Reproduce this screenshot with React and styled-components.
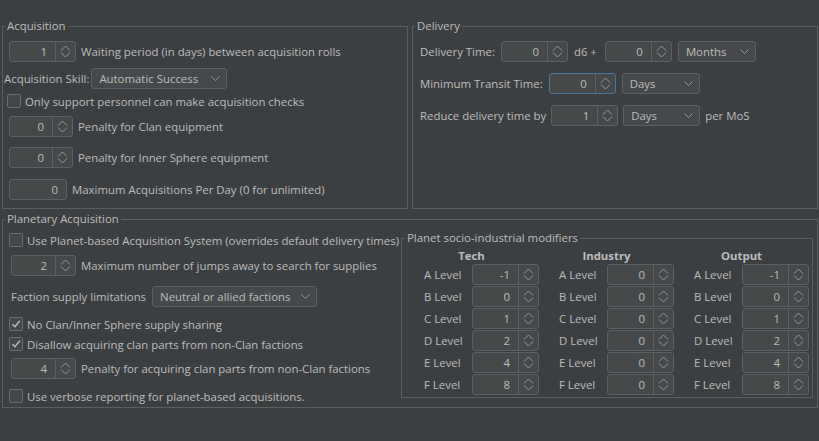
import React from "react";
import styled, { createGlobalStyle } from "styled-components";

const GlobalStyle = createGlobalStyle`
  html, body {
    margin: 0;
    background: #3c3f41;
  }
  body {
    font-family: "Open Sans", "Noto Sans", sans-serif;
    font-size: 11.4px;
    color: #bdbdbd;
  }
`;

const techMods = [-1, 0, 1, 2, 4, 8];
const industryMods = [0, 0, 0, 0, 0, 0];
const outputMods = [-1, 0, 1, 2, 4, 8];
const levels = ["A", "B", "C", "D", "E", "F"];

const SpinIcon = () => (
    <svg width="19" height="19" viewBox="0 0 19 19" fill="none" stroke="#9a9da0" strokeWidth="1">
        <path d="M5 8.5 L9.5 4 L14 8.5" />
        <path d="M5 10.5 L9.5 15 L14 10.5" />
    </svg>
);

const ComboIcon = () => (
    <svg width="9" height="6" viewBox="0 0 9 6" fill="none" stroke="#9a9da0" strokeWidth="1">
        <path d="M0.5 0.5 L4.5 4.5 L8.5 0.5" />
    </svg>
);

const CheckIcon = () => (
    <svg width="12" height="12" viewBox="0 0 12 12" fill="none" stroke="#bbbbbb" strokeWidth="1.5">
        <path d="M2.5 6.2 L5 8.7 L9.8 2.8" />
    </svg>
);

const Spinner = ({ value, w = 67, focused }) => (
    <SpinBox $w={w} $focused={focused}>
        <SpinValue>{value}</SpinValue>
        <SpinArrows>
            <SpinIcon />
        </SpinArrows>
    </SpinBox>
);

const Combo = ({ value, w }) => (
    <ComboBox $w={w}>
        <span>{value}</span>
        <ComboIcon />
    </ComboBox>
);

const Check = ({ checked, label }) => (
    <>
        <CheckBox>{checked && <CheckIcon />}</CheckBox>
        <Label>{label}</Label>
    </>
);

const ModColumnView = ({ title, values }) => (
    <ModColumn>
        <ModHeader>{title}</ModHeader>
        {values.map((v, i) => (
            <ModRow key={levels[i]}>
                <Label>{levels[i]} Level</Label>
                <Spinner value={v} />
            </ModRow>
        ))}
    </ModColumn>
);

export default function App() {
    return (
        <Page>
            <GlobalStyle />
            <TopRow>
                <Group $w={406} $h={190}>
                    <Title>Acquisition</Title>
                    <Row $mt={8} $indent={6} $gap={5}>
                        <Spinner value="1" />
                        <Label>Waiting period (in days) between acquisition rolls</Label>
                    </Row>
                    <Row $mt={6} $indent={1} $gap={2}>
                        <Label>Acquisition Skill:</Label>
                        <Combo value="Automatic Success" w={136} />
                    </Row>
                    <Row $mt={5} $indent={4} $gap={4} $h={14}>
                        <Check label="Only support personnel can make acquisition checks" />
                    </Row>
                    <Row $mt={8} $indent={6} $gap={5}>
                        <Spinner value="0" w={64} />
                        <Label>Penalty for Clan equipment</Label>
                    </Row>
                    <Row $mt={10} $indent={6} $gap={5}>
                        <Spinner value="0" w={64} />
                        <Label>Penalty for Inner Sphere equipment</Label>
                    </Row>
                    <Row $mt={11} $indent={6} $gap={5}>
                        <TextField>0</TextField>
                        <Label>Maximum Acquisitions Per Day (0 for unlimited)</Label>
                    </Row>
                </Group>
                <Group $w={406} $h={190}>
                    <Title>Delivery</Title>
                    <Row $mt={8} $indent={7} $gap={6}>
                        <Label>Delivery Time:</Label>
                        <Spinner value="0" />
                        <Dice>d6 +</Dice>
                        <Spinner value="0" />
                        <Combo value="Months" w={78} />
                    </Row>
                    <Row $mt={11} $indent={7} $gap={6}>
                        <Label>Minimum Transit Time:</Label>
                        <Spinner value="0" focused />
                        <Combo value="Days" w={78} />
                    </Row>
                    <Row $mt={11} $indent={7} $gap={5}>
                        <Label>Reduce delivery time by</Label>
                        <Spinner value="1" />
                        <Combo value="Days" w={77} />
                        <Label>per MoS</Label>
                    </Row>
                </Group>
            </TopRow>
            <Group $w={816} $h={196} $mt={3}>
                <Title>Planetary Acquisition</Title>
                <PlanetBody>
                    <LeftColumn>
                        <Row $mt={7} $indent={6} $gap={4} $h={14}>
                            <Check label="Use Planet-based Acquisition System (overrides default delivery times)" />
                        </Row>
                        <Row $mt={8} $indent={8} $gap={5}>
                            <Spinner value="2" w={65} />
                            <Label>Maximum number of jumps away to search for supplies</Label>
                        </Row>
                        <Row $mt={10} $indent={8} $gap={6}>
                            <Label>Faction supply limitations</Label>
                            <Combo value="Neutral or allied factions" w={165} />
                        </Row>
                        <Row $mt={10} $indent={6} $gap={4} $h={14}>
                            <Check checked label="No Clan/Inner Sphere supply sharing" />
                        </Row>
                        <Row $mt={6} $indent={6} $gap={4} $h={14}>
                            <Check checked label="Disallow acquiring clan parts from non-Clan factions" />
                        </Row>
                        <Row $mt={7} $indent={8} $gap={5}>
                            <Spinner value="4" w={65} />
                            <Label>Penalty for acquiring clan parts from non-Clan factions</Label>
                        </Row>
                        <Row $mt={10} $indent={6} $gap={4} $h={14}>
                            <Check label="Use verbose reporting for planet-based acquisitions." />
                        </Row>
                    </LeftColumn>
                    <ModGroup $w={412} $h={167} $mt={5}>
                        <Title $ml={3}>Planet socio-industrial modifiers</Title>
                        <ModGrid>
                            <ModColumnView title="Tech" values={techMods} />
                            <ModColumnView title="Industry" values={industryMods} />
                            <ModColumnView title="Output" values={outputMods} />
                        </ModGrid>
                    </ModGroup>
                </PlanetBody>
            </Group>
        </Page>
    );
}

const Page = styled.div`
    padding: 19px 1px 0 2px;
`;

const TopRow = styled.div`
    display: flex;
    gap: 4px;
`;

const Group = styled.fieldset`
    margin: ${(p) => p.$mt || 0}px 0 0 0;
    padding: 0;
    border: 1px solid #5b5e60;
    box-sizing: border-box;
    width: ${(p) => p.$w}px;
    height: ${(p) => p.$h}px;
    min-width: 0;
`;

const ModGroup = styled(Group)`
    margin-right: 4px;
    flex: none;
`;

const Title = styled.legend`
    margin-left: ${(p) => p.$ml || 2}px;
    padding: 0 2px;
    line-height: 14px;
    color: #bdbdbd;
`;

const Row = styled.div`
    display: flex;
    align-items: center;
    gap: ${(p) => p.$gap}px;
    height: ${(p) => p.$h || 21}px;
    margin-top: ${(p) => p.$mt}px;
    padding-left: ${(p) => p.$indent}px;
    white-space: nowrap;
`;

const Label = styled.span`
    line-height: 15px;
    white-space: nowrap;
`;

const Dice = styled(Label)`
    margin-right: 2px;
`;

const SpinBox = styled.div`
    display: flex;
    flex: none;
    width: ${(p) => p.$w}px;
    height: 21px;
    box-sizing: border-box;
    border: 1px solid ${(p) => (p.$focused ? "#4a76a3" : "#5e6163")};
    border-radius: 3px;
    background: #45494a;
`;

const SpinValue = styled.div`
    flex: 1;
    text-align: right;
    padding-right: 8px;
    line-height: 19px;
`;

const SpinArrows = styled.div`
    width: 19px;
    border-left: 1px solid #5e6163;
    display: flex;
`;

const TextField = styled.div`
    flex: none;
    width: 58px;
    height: 21px;
    box-sizing: border-box;
    border: 1px solid #5e6163;
    border-radius: 3px;
    background: #45494a;
    text-align: right;
    padding-right: 8px;
    line-height: 19px;
`;

const ComboBox = styled.div`
    display: flex;
    flex: none;
    align-items: center;
    justify-content: space-between;
    width: ${(p) => p.$w}px;
    height: 21px;
    box-sizing: border-box;
    padding: 0 6px 0 7px;
    border: 1px solid #5e6163;
    border-radius: 3px;
    background: #46494b;
    line-height: 19px;
`;

const CheckBox = styled.div`
    flex: none;
    width: 14px;
    height: 14px;
    box-sizing: border-box;
    border: 1px solid #6b6e70;
    border-radius: 2px;
    background: #43474a;
    display: flex;
    align-items: center;
    justify-content: center;
`;

const PlanetBody = styled.div`
    display: flex;
    align-items: flex-start;
`;

const LeftColumn = styled.div`
    flex: 1;
    min-width: 0;
`;

const ModGrid = styled.div`
    display: grid;
    grid-template-columns: repeat(3, 135px);
    padding-left: 2px;
`;

const ModColumn = styled.div`
    display: flex;
    flex-direction: column;
`;

const ModHeader = styled.div`
    font-weight: bold;
    text-align: center;
    line-height: 15px;
    margin: 3px 0 1px;
`;

const ModRow = styled.div`
    display: grid;
    grid-template-columns: 48px 67px;
    align-items: center;
    height: 21px;
    margin-bottom: 1px;
    padding-left: 20px;
`;
